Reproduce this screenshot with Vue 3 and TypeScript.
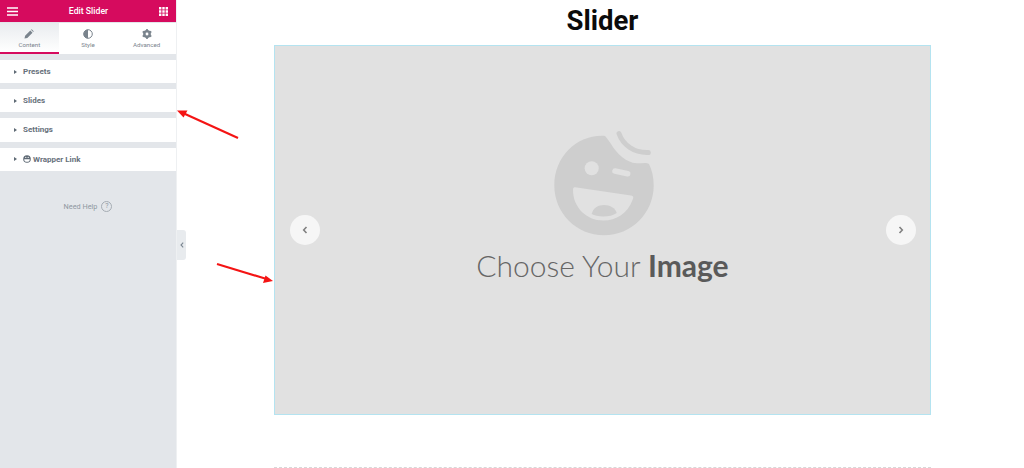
<script setup lang="ts">
const rows: { label: string; icon?: boolean }[] = [
  { label: 'Presets' },
  { label: 'Slides' },
  { label: 'Settings' },
  { label: 'Wrapper Link', icon: true },
]
</script>

<template>
  <div class="page">
    <aside class="panel">
      <header class="head">
        <svg class="head-icon" viewBox="0 0 11 9" width="11" height="9">
          <path d="M0 1h11M0 4.5h11M0 8h11" stroke="#fff" stroke-width="1.5" />
        </svg>
        <span class="head-title">Edit Slider</span>
        <svg class="head-icon" viewBox="0 0 9 9" width="9" height="9">
          <path d="M0 0h2.4v2.4H0zM3.3 0h2.4v2.4H3.3zM6.6 0H9v2.4H6.6zM0 3.3h2.4v2.4H0zM3.3 3.3h2.4v2.4H3.3zM6.6 3.3H9v2.4H6.6zM0 6.6h2.4V9H0zM3.3 6.6h2.4V9H3.3zM6.6 6.6H9V9H6.6z" fill="#fff" />
        </svg>
      </header>
      <nav class="tabs">
        <div class="tab tab-active">
          <svg viewBox="0 0 10 10" width="10" height="10">
            <path d="M0.5 9.5l.6-2.8 5.2-5.2 2.2 2.2-5.2 5.2zM7 .8l.7-.5 2 2-.5.7z" fill="#7a848d" />
          </svg>
          <span>Content</span>
        </div>
        <div class="tab">
          <svg viewBox="0 0 10 10" width="10" height="10">
            <circle cx="5" cy="5" r="4.3" fill="none" stroke="#7a848d" stroke-width="1" />
            <path d="M5 .7a4.3 4.3 0 0 0 0 8.6z" fill="#7a848d" />
          </svg>
          <span>Style</span>
        </div>
        <div class="tab">
          <svg viewBox="0 0 10 10" width="10" height="10">
            <circle cx="5" cy="5" r="2.9" fill="none" stroke="#7a848d" stroke-width="2" />
            <path d="M5 0v10M.7 2.5l8.6 5M.7 7.5l8.6-5" stroke="#7a848d" stroke-width="1.7" />
            <circle cx="5" cy="5" r="1.4" fill="#fff" />
          </svg>
          <span>Advanced</span>
        </div>
      </nav>
      <div class="rows">
        <div v-for="row in rows" :key="row.label" class="row">
          <span class="caret"></span>
          <svg v-if="row.icon" class="row-icon" viewBox="0 0 8 8" width="8" height="8">
            <circle cx="4" cy="4" r="3.8" fill="#5f6a75" />
            <path d="M1.2 4.2h5.6a2.8 2.6 0 0 1-5.6 0z" fill="#fff" />
            <circle cx="2.8" cy="2.4" r=".6" fill="#fff" />
            <circle cx="5.2" cy="2.4" r=".6" fill="#fff" />
          </svg>
          <span>{{ row.label }}</span>
        </div>
      </div>
      <div class="help">
        <span>Need Help</span>
        <span class="help-q">?</span>
      </div>
    </aside>

    <div class="collapse-col">
      <div class="collapse">
        <svg viewBox="0 0 4 6" width="4" height="6">
          <path d="M3.2.7L1 3l2.2 2.3" fill="none" stroke="#7c8791" stroke-width="1.1" />
        </svg>
      </div>
    </div>

    <main class="content">
      <h1 class="title">Slider</h1>
      <section class="frame">
        <svg class="face" viewBox="0 0 100 110" width="100" height="110">
          <path d="M51 6 C24 4 .3 26 .3 55.5 C.3 83 22.500 105.300 50 105.300 C77.500 105.300 99.700 83 99.700 55.500 C99.700 47 98 40 95 34 C92 32 88 33.500 82.700 33.300 C72 32.500 63 24 57 14 C55 11 53 8 51 6Z" fill="#cecece" />
          <path d="M65 3.500 C69 15 80 23 94.300 22.500" fill="none" stroke="#cecece" stroke-width="5" stroke-linecap="round" />
          <circle cx="37.700" cy="38.300" r="7" fill="#e1e1e1" />
          <path d="M61 41 L73.700 43.700" stroke="#e1e1e1" stroke-width="5.500" stroke-linecap="round" />
          <path d="M21 57.300 L77 65.500 C80 66 79.500 68 78.500 70 C74 83 62 90.500 49.500 90.500 C32 90.500 19 77 19 60 C19 58 19.500 57.200 21 57.300Z" fill="#e1e1e1" />
          <path d="M37.700 84 C39 78 44 75 50 75 C56 75 61.500 78 62.700 83 C57 87.500 43 87.500 37.700 84Z" fill="#cecece" />
        </svg>
        <p class="choose">Choose Your <b>Image</b></p>
        <button class="nav nav-left" type="button" aria-label="Previous">
          <svg viewBox="0 0 6 8" width="6" height="8"><path d="M4.500 1L1.700 4l2.800 3" fill="none" stroke="#808080" stroke-width="1.600" /></svg>
        </button>
        <button class="nav nav-right" type="button" aria-label="Next">
          <svg viewBox="0 0 6 8" width="6" height="8"><path d="M1.500 1l2.800 3-2.800 3" fill="none" stroke="#808080" stroke-width="1.600" /></svg>
        </button>
      </section>
      <div class="divider"></div>
    </main>

    <svg class="arrows" viewBox="0 0 1024 468" width="1024" height="468">
      <path d="M238 138L184 113.500" stroke="#f41414" stroke-width="2.100" />
      <path d="M177 110.500L187.500 110.500L183.500 117.500Z" fill="#f41414" />
      <path d="M217 264L265 278.500" stroke="#f41414" stroke-width="2.100" />
      <path d="M273 281L263 283L265.500 275.500Z" fill="#f41414" />
    </svg>
  </div>
</template>

<style>
html, body { margin: 0; background: #fff; overflow: hidden; }
</style>

<style scoped>
.page {
  position: relative;
  display: flex;
  width: 1024px;
  height: 468px;
  overflow: hidden;
  background: #fff;
  font-family: Roboto, "Liberation Sans", sans-serif;
}
.panel {
  width: 176px;
  height: 468px;
  flex: none;
  background: #e3e6ea;
  border-right: 1px solid #eef0f2;
  display: flex;
  flex-direction: column;
}
.head {
  height: 22px;
  flex: none;
  background: #d60b5e;
  color: #fff;
  display: flex;
  align-items: center;
  justify-content: space-between;
  padding: 0 8px 0 7px;
}
.head-title { font-size: 8.700px; font-weight: 500; }
.head-icon { display: block; }
.tabs {
  margin-top: 1px;
  height: 31px;
  flex: none;
  background: #fff;
  display: flex;
}
.tab {
  flex: 1;
  display: flex;
  flex-direction: column;
  align-items: center;
  gap: 2px;
  padding-top: 6px;
  box-sizing: border-box;
  font-size: 6.200px;
  color: #7a848d;
}
.tab-active {
  background: linear-gradient(#e9ecef, #fff);
  border-bottom: 2px solid #d60b5e;
}
.rows {
  margin-top: 6px;
  display: flex;
  flex-direction: column;
  gap: 6px;
}
.row {
  height: 23.200px;
  background: #fff;
  display: flex;
  align-items: center;
  padding-left: 14px;
  font-size: 8px;
  font-weight: 700;
  color: #67717b;
}
.caret {
  width: 0;
  height: 0;
  margin-right: 6px;
  border-left: 3px solid #5f6a75;
  border-top: 2.500px solid transparent;
  border-bottom: 2.500px solid transparent;
}
.row-icon { margin-right: 2px; }
.help {
  margin-top: 29px;
  display: flex;
  justify-content: center;
  align-items: center;
  gap: 4px;
  padding-top: 1px;
  font-size: 7.300px;
  color: #8f98a1;
}
.help-q {
  width: 9px;
  height: 9px;
  border: 1px solid #a5acb3;
  border-radius: 50%;
  display: flex;
  align-items: center;
  justify-content: center;
  font-size: 7px;
}
.collapse-col {
  width: 10px;
  flex: none;
  padding-top: 230px;
  box-sizing: border-box;
}
.collapse {
  width: 9px;
  height: 30px;
  background: #e8ebee;
  border-radius: 0 3px 3px 0;
  display: flex;
  align-items: center;
  justify-content: center;
}
.content {
  margin-left: 87px;
  width: 657px;
  flex: none;
  display: flex;
  flex-direction: column;
  align-items: center;
}
.title {
  margin: 0;
  height: 45px;
  line-height: 41px;
  font-size: 27.500px;
  font-weight: 700;
  color: #0b0b0b;
}
.frame {
  position: relative;
  width: 100%;
  height: 370px;
  box-sizing: border-box;
  background: #e1e1e1;
  border: 1px solid #b4e3f0;
  display: flex;
  flex-direction: column;
  align-items: center;
  padding-top: 84px;
}
.face { display: block; margin-left: 2px; }
.choose {
  margin: 3px 0 0;
  font-family: Lato, "Open Sans", sans-serif;
  font-size: 30px;
  font-weight: 300;
  line-height: 44px;
  color: #666;
  white-space: nowrap;
}
.choose b { font-weight: 700; color: #5a5a5a; }
.nav {
  position: absolute;
  top: 169px;
  width: 30px;
  height: 30px;
  padding: 0;
  border: 0;
  border-radius: 50%;
  background: #f6f6f6;
  display: flex;
  align-items: center;
  justify-content: center;
}
.nav-left { left: 15px; }
.nav-right { right: 14px; }
.divider {
  margin-top: 52px;
  width: 100%;
  border-top: 1px dashed #d8d8d8;
}
.arrows {
  position: absolute;
  left: 0;
  top: 0;
  pointer-events: none;
}
</style>
